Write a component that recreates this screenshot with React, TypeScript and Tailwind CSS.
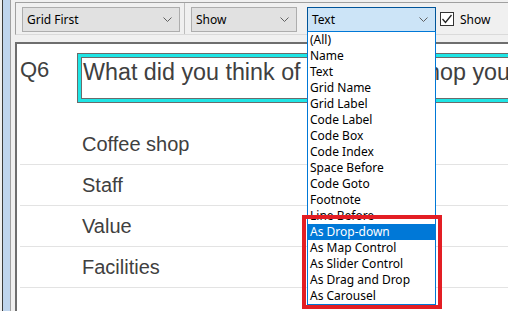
import React from "react";

const listItems = [
  "(All)",
  "Name",
  "Text",
  "Grid Name",
  "Grid Label",
  "Code Label",
  "Code Box",
  "Code Index",
  "Space Before",
  "Code Goto",
  "Footnote",
  "Line Before",
  "As Drop-down",
  "As Map Control",
  "As Slider Control",
  "As Drag and Drop",
  "As Carousel",
];

const rows = ["Coffee shop", "Staff", "Value", "Facilities"];

const Chevron = () => (
  <svg width="9" height="5" viewBox="0 0 9 5" className="shrink-0">
    <path d="M0.5 0.5 L4.5 4.5 L8.5 0.5" stroke="#606060" strokeWidth="1" fill="none" />
  </svg>
);

interface ComboProps {
  label: string;
  width: string;
  active?: boolean;
}

const Combo: React.FC<ComboProps> = ({ label, width, active }) => (
  <div
    className={
      "mt-[4px] h-[25px] flex items-center justify-between pl-[4px] pr-[7px] border text-[12px] text-black " +
      width +
      (active ? " bg-[#cce4f7] border-[#005499]" : " bg-[#e1e1e1] border-[#adadad]")
    }
  >
    <span className="leading-none">{label}</span>
    <Chevron />
  </div>
);

export default function App() {
  return (
    <div className="relative w-[508px] h-[311px] overflow-hidden bg-[#f0f0f0] flex font-['Noto_Sans',sans-serif]">
      {/* left frame edge */}
      <div className="w-[2px]" />
      <div className="w-px bg-[#3c3c3c]" />
      <div className="w-[7px] bg-[#bfd5ee]" />
      <div className="w-px bg-[#a0a0a0]" />
      <div className="w-[4px]" />

      <div className="flex-1 min-w-0 flex flex-col">
        <div className="h-[2px] shrink-0" />

        {/* toolbar */}
        <div className="h-[33px] shrink-0 flex items-start border-t border-l border-b border-t-[#a0a0a0] border-l-[#a0a0a0] border-b-[#dadada]">
          <div className="ml-[6px]">
            <Combo label="Grid First" width="w-[158px]" />
          </div>
          <div className="ml-[4px] w-px h-full bg-[#bdbdbd]" />
          <div className="ml-[6px]">
            <Combo label="Show" width="w-[106px]" />
          </div>
          <div className="ml-[10px]">
            <Combo label="Text" width="w-[129px]" active />
          </div>
          <div className="ml-[4px] mt-[9px] w-[14px] h-[14px] border border-[#333333] bg-white flex items-center justify-center">
            <svg width="12" height="12" viewBox="0 0 12 12">
              <path d="M1.5 6 L4.5 9.5 L10.5 2" stroke="#222222" strokeWidth="1.3" fill="none" />
            </svg>
          </div>
          <span className="ml-[6px] mt-[8px] text-[12px] leading-[18px] text-black">Show</span>
        </div>

        <div className="h-[7px] shrink-0" />

        {/* question panel */}
        <div className="flex-1 bg-white border-t-2 border-l-2 border-[#6e6e6e] font-['Liberation_Sans',Arial,sans-serif] text-[#404040]">
          <div className="flex items-start mt-[9px]">
            <div className="w-[60px] shrink-0 pl-[3px] pt-[4px] text-[22px] leading-[26px]">Q6</div>
            <div className="w-[480px] shrink-0 h-[50px] border border-[#6b6b6b]">
              <div className="h-full border-[3px] border-[#1ee5e5]">
                <div className="h-full border border-[#6b6b6b] pl-[1px] pt-px text-[23.3px] leading-[26px] whitespace-nowrap overflow-hidden">
                  What did you think of the coffee shop you visited?
                </div>
              </div>
            </div>
          </div>

          <div className="mt-[21px] ml-[3px]">
            {rows.map((r) => (
              <div key={r} className="h-[41px] border-b border-[#e3e3e3] pl-[62px] text-[20px] leading-[40px]">
                {r}
              </div>
            ))}
          </div>
        </div>
      </div>

      {/* open drop-down list */}
      <div className="absolute left-[307px] top-[31px] w-[129px] border border-[#0078d7] bg-white">
        {listItems.map((item) => (
          <div
            key={item}
            className={
              "h-[16px] pl-[2px] text-[12px] leading-[16px] whitespace-nowrap " +
              (item === "As Drop-down" ? "bg-[#0078d7] text-white" : "text-black")
            }
          >
            {item}
          </div>
        ))}
      </div>

      {/* highlight frame */}
      <div className="absolute left-[302px] top-[215px] w-[140px] h-[94px] border-4 border-[#e31e24]" />
    </div>
  );
}
